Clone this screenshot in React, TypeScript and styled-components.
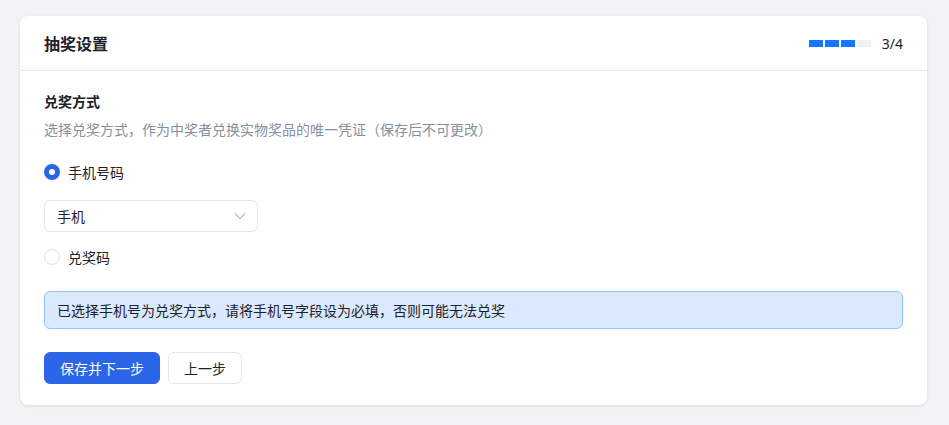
import styled, { createGlobalStyle } from "styled-components";
import { useState } from "react";

const GlobalStyle = createGlobalStyle`
  * { box-sizing: border-box; }
  body {
    margin: 0;
    background: #f2f3f5;
    font-family: "Noto Sans CJK SC", "Noto Sans", sans-serif;
    color: #1d2129;
  }
`;

const Page = styled.div`
  padding: 16px 22px 20px 20px;
`;

const Card = styled.div`
  background: #ffffff;
  border-radius: 8px;
  box-shadow: 0 1px 3px rgba(0, 0, 0, 0.12);
`;

const Header = styled.div`
  display: flex;
  align-items: center;
  justify-content: space-between;
  height: 55px;
  padding: 0 24px;
  border-bottom: 1px solid #e5e6eb;
`;

const Title = styled.div`
  font-size: 16px;
  font-weight: 700;
  line-height: 24px;
  color: #1d2129;
`;

const Progress = styled.div`
  display: flex;
  align-items: center;
  gap: 11px;
`;

const Segments = styled.div`
  display: flex;
  gap: 2px;
`;

const Segment = styled.div<{ $on: boolean }>`
  width: 14px;
  height: 7px;
  background: ${(p) => (p.$on ? "#1677ff" : "#eef2f7")};
`;

const Step = styled.span`
  font-family: "Noto Sans", sans-serif;
  font-size: 14px;
  color: #1d2129;
`;

const Body = styled.div`
  padding: 20px 24px 21px;
`;

const SectionTitle = styled.div`
  font-size: 14px;
  font-weight: 700;
  line-height: 20px;
`;

const Hint = styled.div`
  margin-top: 7px;
  font-size: 14px;
  line-height: 22px;
  color: #86909c;
`;

const RadioRow = styled.label<{ $top: number }>`
  display: flex;
  align-items: center;
  gap: 8px;
  margin-top: ${(p) => p.$top}px;
  height: 22px;
  font-size: 14px;
  color: #1d2129;
  cursor: pointer;
`;

const RadioDot = styled.span<{ $checked: boolean }>`
  width: 16px;
  height: 16px;
  border-radius: 50%;
  border: ${(p) => (p.$checked ? "5px solid #2b65e8" : "1px solid #dcdfe6")};
  background: #ffffff;
`;

const Select = styled.div`
  display: flex;
  align-items: center;
  justify-content: space-between;
  width: 214px;
  height: 32px;
  margin-top: 17px;
  padding: 0 10px 0 12px;
  border: 1px solid #e5e6eb;
  border-radius: 6px;
  font-size: 14px;
  color: #1d2129;
`;

const Alert = styled.div`
  margin-top: 23px;
  height: 38px;
  display: flex;
  align-items: center;
  padding: 0 12px;
  background: #dbe9fe;
  border: 1px solid #93c5fd;
  border-radius: 6px;
  font-size: 14px;
  color: #1d2129;
`;

const Actions = styled.div`
  display: flex;
  gap: 8px;
  margin-top: 23px;
`;

const Button = styled.button<{ $primary?: boolean }>`
  height: 32px;
  padding: 0 15px;
  border-radius: 6px;
  font-family: inherit;
  font-size: 14px;
  cursor: pointer;
  border: 1px solid ${(p) => (p.$primary ? "#2b65e8" : "#e5e6eb")};
  background: ${(p) => (p.$primary ? "#2b65e8" : "#ffffff")};
  color: ${(p) => (p.$primary ? "#ffffff" : "#1d2129")};
`;

export default function App(): JSX.Element {
  const [mode, setMode] = useState("phone");

  return (
    <Page>
      <GlobalStyle />
      <Card>
        <Header>
          <Title>抽奖设置</Title>
          <Progress>
            <Segments>
              {[1, 2, 3, 4].map((i) => (
                <Segment key={i} $on={i <= 3} />
              ))}
            </Segments>
            <Step>3/4</Step>
          </Progress>
        </Header>
        <Body>
          <SectionTitle>兑奖方式</SectionTitle>
          <Hint>选择兑奖方式，作为中奖者兑换实物奖品的唯一凭证（保存后不可更改）</Hint>
          <RadioRow $top={21} onClick={() => setMode("phone")}>
            <RadioDot $checked={mode === "phone"} />
            手机号码
          </RadioRow>
          <Select>
            手机
            <svg width="14" height="14" viewBox="0 0 14 14" fill="none">
              <path d="M2 4.5l5 5 5-5" stroke="#b8bec8" strokeWidth="1.2" />
            </svg>
          </Select>
          <RadioRow $top={14} onClick={() => setMode("code")}>
            <RadioDot $checked={mode === "code"} />
            兑奖码
          </RadioRow>
          <Alert>已选择手机号为兑奖方式，请将手机号字段设为必填，否则可能无法兑奖</Alert>
          <Actions>
            <Button $primary>保存并下一步</Button>
            <Button>上一步</Button>
          </Actions>
        </Body>
      </Card>
    </Page>
  );
}
